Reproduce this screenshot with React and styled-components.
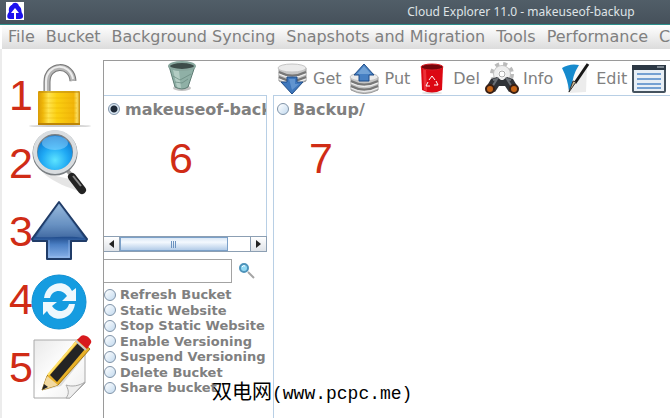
import React, { useState } from 'react'
import styled, { createGlobalStyle } from 'styled-components'

const GlobalStyle = createGlobalStyle`
  * { box-sizing: border-box; }
  body {
    margin: 0;
    overflow: hidden;
    background: #fff;
    font-family: "DejaVu Sans", sans-serif;
    color: #808080;
  }
  button {
    border: 0;
    padding: 0;
    background: none;
    font: inherit;
    color: inherit;
    cursor: pointer;
  }
  svg { display: block; overflow: visible; }
`

const menus = ['File', 'Bucket', 'Background Syncing', 'Snapshots and Migration', 'Tools', 'Performance', 'Configure']

const bucketActions = [
  'Refresh Bucket',
  'Static Website',
  'Stop Static Website',
  'Enable Versioning',
  'Suspend Versioning',
  'Delete Bucket',
  'Share bucket',
]

function LockIcon() {
  return (
    <svg width="62" height="68" viewBox="0 0 62 68">
      <defs>
        <linearGradient id="gold" x1="0" x2="1" y1="0" y2="0">
          <stop offset="0" stopColor="#d99a06" />
          <stop offset=".12" stopColor="#f0b90c" />
          <stop offset=".25" stopColor="#ffe34d" />
          <stop offset=".45" stopColor="#fbd010" />
          <stop offset=".85" stopColor="#f2b50a" />
          <stop offset=".93" stopColor="#fbdf60" />
          <stop offset="1" stopColor="#c98b08" />
        </linearGradient>
      </defs>
      <ellipse cx="29" cy="65" rx="31" ry="1" fill="#ccc" />
      <path d="M16 31V21C16 2 41 2 42 20" fill="none" stroke="#777" strokeWidth="7" />
      <path d="M16 31V21C16 2 41 2 42 20" fill="none" stroke="#b5b5b5" strokeWidth="5" />
      <path d="M15 31V20C16 2 39 1 42 18" fill="none" stroke="#ededed" strokeWidth="2" />
      <rect x="7" y="30" width="42" height="34" rx="1" fill="url(#gold)" />
      <path d="M8 31H48" stroke="#b98611" />
      <path d="M10 37H46M10 42H46M10 47H46M10 52H46M10 57H46" stroke="#e5a900" opacity=".35" />
      <path d="M7 63H49" stroke="#bd8506" strokeWidth="2" />
    </svg>
  )
}

function SearchIcon() {
  return (
    <svg width="62" height="68" viewBox="0 0 62 68">
      <defs>
        <radialGradient id="lens" cx=".5" cy=".68" r=".65">
          <stop offset="0" stopColor="#5de4ff" />
          <stop offset=".5" stopColor="#20a9f4" />
          <stop offset="1" stopColor="#0870ca" />
        </radialGradient>
      </defs>
      <path d="M12 44C24 54 36 58 50 63L43 51Z" fill="#ccc" opacity=".5" />
      <path d="M36 41L42 48" stroke="#999" strokeWidth="4" />
      <path d="M41 48L51 61" stroke="#222" strokeWidth="8" strokeLinecap="round" />
      <path d="M42 47L50 57" stroke="#8a8a8a" strokeWidth="2" />
      <circle cx="24" cy="24" r="20" fill="url(#lens)" stroke="#7a7f83" strokeWidth="5" />
      <circle cx="24" cy="23" r="20" fill="none" stroke="#d9dde0" strokeWidth="4" />
      <ellipse cx="24" cy="14" rx="13" ry="7" fill="#b3e0ff" opacity=".4" />
    </svg>
  )
}

function UpIcon() {
  return (
    <svg width="62" height="68" viewBox="0 0 62 68">
      <defs>
        <linearGradient id="steel" x1="0" x2="0" y1="0" y2="1">
          <stop offset="0" stopColor="#94b6da" />
          <stop offset=".4" stopColor="#527fb6" />
          <stop offset=".62" stopColor="#234f8f" />
          <stop offset=".75" stopColor="#4b7fc4" />
          <stop offset="1" stopColor="#8db6ec" />
        </linearGradient>
      </defs>
      <path d="M28 5L56 42L55 44H40V62H16V44H2L1 42Z" fill="url(#steel)" stroke="#203c68" strokeWidth="2" strokeLinejoin="round" />
      <path d="M28 8L53 41C38 38 25 41 5 40Z" fill="#b7d3eb" opacity=".22" />
      <path d="M18 43V60H38V43" fill="none" stroke="#9fc1ee" opacity=".7" />
    </svg>
  )
}

function SyncIcon() {
  return (
    <svg width="62" height="68" viewBox="0 0 62 68">
      <circle cx="28" cy="37" r="27" fill="#159ce0" stroke="#0f8fd2" />
      <path d="M13 33C15 17 35 13 41 26L45 23V36H31L36 31C31 23 21 25 19 33Z" fill="#eef8fd" />
      <path d="M44 39C42 55 22 59 16 46L12 50V37H26L21 41C26 49 36 47 38 39Z" fill="#eef8fd" />
    </svg>
  )
}

function NoteIcon() {
  return (
    <svg width="62" height="68" viewBox="0 0 62 68">
      <defs>
        <linearGradient id="paper" x1="0" x2="1" y1="0" y2="1">
          <stop offset="0" stopColor="#e9e9e9" />
          <stop offset=".5" stopColor="#fff" />
          <stop offset="1" stopColor="#ececec" />
        </linearGradient>
      </defs>
      <path d="M3 7H54V50L39 65H3Z" fill="url(#paper)" stroke="#aaa" />
      <path d="M35 65C39 60 37 56 35 52C41 54 48 53 54 49L39 65Z" fill="#eee" stroke="#aaa" />
      <path d="M14 57L30 53L56 20L54 15Z" fill="#999" opacity=".3" />
      <path d="M11 57L16 43L47 6L59 16L27 52Z" fill="#e8b128" stroke="#a57a16" />
      <path d="M11 57L16 43L27 52Z" fill="#f2d9a0" />
      <path d="M19 42L47 10L54 16L26 49Z" fill="#242424" />
      <path d="M17 42L47 7" stroke="#ffe16b" strokeWidth="2" />
      <path d="M46 7L50 3C53 0 62 6 60 10L56 16Z" fill="#d71a1e" />
      <path d="M45 8L55 17" stroke="#c9c9c9" strokeWidth="2" />
      <path d="M11 57L13 51L17 54Z" fill="#222" />
    </svg>
  )
}

function TrashIcon() {
  return (
    <svg width="28" height="30" viewBox="0 0 28 30">
      <ellipse cx="14" cy="27" rx="9" ry="3" fill="#999" opacity=".6" />
      <path d="M1 5L7 26Q14 30 20 26L27 5Z" fill="#8fb0a6" stroke="#5f7d75" />
      <path d="M5 9L9 26Q11 27 13 27L11 10Z" fill="#c2d8d0" opacity=".7" />
      <path d="M5 15L12 19L23 13M7 21L14 22L20 18" fill="none" stroke="#67877e" opacity=".7" />
      <ellipse cx="14" cy="5" rx="13" ry="4" fill="#3d4c49" stroke="#89a79e" strokeWidth="2" />
    </svg>
  )
}

function Disks({ y }) {
  return (
    <g transform={`translate(0 ${y})`}>
      <path d="M2 4V17Q15 24 29 17V4Z" fill="#c4c4c4" stroke="#999" />
      <path d="M2 8Q15 15 29 8M2 13Q15 20 29 13" fill="none" stroke="#777" strokeWidth="2" />
      <path d="M2 10Q15 17 29 10M2 15Q15 22 29 15" fill="none" stroke="#f4f4f4" />
      <ellipse cx="15" cy="4" rx="14" ry="4" fill="#ebebeb" stroke="#c4c4c4" />
    </g>
  )
}

function GetIcon() {
  return (
    <svg width="30" height="32" viewBox="0 0 30 32">
      <Disks y={2} />
      <path d="M10 15H20V20H26L15 32L4 20H10Z" fill="#3f78bd" stroke="#214d87" />
      <path d="M12 17H18V22H22L15 28Z" fill="#83b0e2" opacity=".5" />
    </svg>
  )
}

function PutIcon() {
  return (
    <svg width="30" height="32" viewBox="0 0 30 32">
      <Disks y={11} />
      <path d="M15 2L25 13H20V19H10V13H5Z" fill="#4680c3" stroke="#214d87" />
      <path d="M15 4L22 12H8Z" fill="#9cc4ea" opacity=".5" />
    </svg>
  )
}

function DelIcon() {
  return (
    <svg width="30" height="32" viewBox="0 0 30 32">
      <ellipse cx="15" cy="31" rx="10" ry="1" fill="#ddd" />
      <path d="M4 5L5 28Q15 33 25 28L26 5Z" fill="#dc0712" />
      <path d="M6 7L7 28L10 29L9 8Z" fill="#f54c52" opacity=".6" />
      <ellipse cx="15" cy="5" rx="11" ry="3" fill="#74060b" stroke="#d81b22" />
      <path d="M12 18L15 14L18 18M19 19L21 23H17M13 24H9L11 20" fill="none" stroke="#fff" strokeWidth="1" strokeLinejoin="round" />
    </svg>
  )
}

function InfoIcon() {
  return (
    <svg width="30" height="32" viewBox="0 0 30 32">
      <circle cx="15" cy="12" r="10" fill="none" stroke="#bbb" strokeWidth="4" strokeDasharray="4 4" />
      <circle cx="15" cy="12" r="6" fill="#fff" stroke="#c4c4c4" strokeWidth="6" />
      <circle cx="15" cy="12" r="6" fill="#fff" stroke="#eee" strokeWidth="4" />
      <circle cx="15" cy="12" r="3" fill="#fff" stroke="#aaa" />
      <path d="M4 17L10 15L14 18H16L20 15L26 17L32 27L22 30L18 24H12L8 30L-2 27Z" fill="#303338" />
      <path d="M6 18L10 17L5 25M24 18L20 17L25 25" fill="none" stroke="#6b7076" strokeWidth="2" />
      <circle cx="3" cy="27" r="4" fill="#c56315" stroke="#392015" strokeWidth="2" />
      <circle cx="27" cy="27" r="4" fill="#c56315" stroke="#392015" strokeWidth="2" />
    </svg>
  )
}

function EditIcon() {
  return (
    <svg width="30" height="32" viewBox="0 0 30 32">
      <path d="M7 6L27 3L26 30L8 31Z" fill="#ececec" />
      <path d="M2 6Q10 1 19 3L20 9L9 29Q8 18 2 6Z" fill="#168acd" />
      <path d="M19 3L25 3L12 25Q12 14 19 3Z" fill="#f9f9f9" />
      <path d="M28 2L15 21" stroke="#181818" strokeWidth="3" />
      <path d="M16 20L13 19L9 30Z" fill="#c9b48e" stroke="#333" />
    </svg>
  )
}

function ListIcon() {
  return (
    <svg width="30" height="32" viewBox="0 0 30 32">
      <rect x="-1" y="4" width="32" height="26" rx="1" fill="#e7eef5" stroke="#45535f" strokeWidth="2" />
      <path d="M-2 3H32V8H-2Z" fill="#2c3844" />
      <path d="M23 5H30" stroke="#ccd3da" />
      <path d="M3 12H27M3 17H27M3 22H27M3 26H27" stroke="#74a0d2" strokeWidth="2" />
    </svg>
  )
}

const tasks = [
  { label: 'Unlock', Icon: LockIcon },
  { label: 'Search', Icon: SearchIcon },
  { label: 'Upload', Icon: UpIcon },
  { label: 'Sync', Icon: SyncIcon },
  { label: 'Note', Icon: NoteIcon },
]

const tools = [
  { label: 'Get', Icon: GetIcon },
  { label: 'Put', Icon: PutIcon },
  { label: 'Del', Icon: DelIcon },
  { label: 'Info', Icon: InfoIcon },
  { label: 'Edit', Icon: EditIcon },
  { label: 'Sync', Icon: ListIcon },
]

function App() {
  const [action, setAction] = useState('')
  const [query, setQuery] = useState('')

  return (
    <Window>
      <GlobalStyle />
      <TitleBar>
        <AppLogo viewBox="0 0 18 18" aria-hidden="true">
          <rect width="18" height="18" fill="#fff" />
          <path d="M4 17C0 17 1 12 3 10C2 5 5 3 6 3C7 0 12 0 13 4C16 6 15 9 16 11C18 14 17 17 14 17Z" fill="#1c12ee" />
          <path d="M9 6L13 11H10V17H8V11H5Z" fill="#fff" />
        </AppLogo>
        <Title>Cloud Explorer 11.0 - makeuseof-backup</Title>
      </TitleBar>
      <MenuBar>
        {menus.map((menu) => <button key={menu}>{menu}</button>)}
      </MenuBar>
      <Body>
        <Sidebar>
          {tasks.map(({ label, Icon }, i) => (
            <Task key={label}>
              <Mark>{i + 1}</Mark>
              <button aria-label={label}><Icon /></button>
            </Task>
          ))}
        </Sidebar>
        <Panel>
          <BucketColumn>
            <BucketHeader>
              <button aria-label="Delete"><TrashIcon /></button>
            </BucketHeader>
            <BucketList>
              <Entry>
                <Radio name="bucket" defaultChecked />
                makeuseof-backup
              </Entry>
              <PaneMark $left="65px">6</PaneMark>
            </BucketList>
            <ScrollBar>
              <ScrollButton aria-label="Scroll left">
                <svg width="5" height="8"><path d="M5 0V8L0 4Z" fill="#222" /></svg>
              </ScrollButton>
              <Track><Thumb><i /><i /><i /></Thumb></Track>
              <ScrollButton aria-label="Scroll right">
                <svg width="5" height="8"><path d="M0 0V8L5 4Z" fill="#222" /></svg>
              </ScrollButton>
            </ScrollBar>
            <SearchRow>
              <SearchInput aria-label="Search" value={query} onChange={(e) => setQuery(e.target.value)} />
              <button aria-label="Find">
                <svg width="16" height="16" viewBox="0 0 16 16">
                  <path d="M9 9L15 15" stroke="#a5a5a5" strokeWidth="2" />
                  <circle cx="5" cy="5" r="4" fill="#93daf5" stroke="#4e93ba" strokeWidth="2" />
                  <path d="M3 4Q4 2 6 3" stroke="#fff" fill="none" />
                </svg>
              </button>
            </SearchRow>
            <Actions>
              {bucketActions.map((name) => (
                <Action key={name}>
                  <Radio name="action" checked={action === name} onChange={() => setAction(name)} />
                  {name}
                </Action>
              ))}
            </Actions>
          </BucketColumn>
          <FileColumn>
            <Toolbar>
              {tools.map(({ label, Icon }) => (
                <Tool key={label}><Icon />{label}</Tool>
              ))}
            </Toolbar>
            <FileList>
              <Entry>
                <Radio name="file" />
                Backup/
              </Entry>
              <PaneMark $left="35px">7</PaneMark>
            </FileList>
          </FileColumn>
        </Panel>
      </Body>
      <Watermark>双电网<span>(www.pcpc.me)</span></Watermark>
    </Window>
  )
}

export default App

const Window = styled.div`
  position: relative;
  display: flex;
  flex-direction: column;
  min-height: 100vh;
  overflow: hidden;
`

const TitleBar = styled.header`
  display: flex;
  align-items: center;
  height: 25px;
  padding: 0 0 2px 6px;
  background: linear-gradient(#515e68, #46515b);
  border-bottom: 1px solid #2c8f8c;
`

const AppLogo = styled.svg`
  width: 18px;
  height: 18px;
  flex: none;
`

const Title = styled.div`
  flex: 1;
  padding-left: 348px;
  text-align: center;
  white-space: nowrap;
  font: 12px "Noto Sans", sans-serif;
  color: #dfe3e6;
`

const MenuBar = styled.nav`
  display: flex;
  gap: 11px;
  height: 24px;
  padding: 0 0 2px 6px;
  margin-left: 2px;
  background: linear-gradient(#fff, #dcdcdc);
  font-size: 16px;
  white-space: nowrap;
  overflow: hidden;

  button {
    flex: none;
  }
`

const Body = styled.main`
  flex: 1;
  display: grid;
  grid-template-columns: 101px minmax(0, 1fr);
  border-left: 2px solid #ececec;
`

const Sidebar = styled.aside`
  display: flex;
  flex-direction: column;
  padding: 12px 0 0 7px;
`

const Task = styled.div`
  display: grid;
  grid-template-columns: 22px 62px;
  align-items: center;
  height: 68px;
`

const Mark = styled.span`
  font: 43px/48px "Liberation Sans", sans-serif;
  color: #d02c16;
`

const Panel = styled.section`
  display: flex;
  gap: 6px;
  margin-top: 11px;
  border-top: 1px solid #9a9a9a;
  border-left: 1px solid #9a9a9a;
`

const BucketColumn = styled.div`
  display: flex;
  flex-direction: column;
  width: 163px;
  flex: none;
`

const BucketHeader = styled.div`
  display: flex;
  justify-content: center;
  align-items: flex-start;
  height: 34px;
  padding-right: 8px;
`

const BucketList = styled.div`
  position: relative;
  height: 141px;
  overflow: hidden;
  border: 1px solid #b8cfe5;
  border-left: 0;
  border-bottom: 0;
`

const Entry = styled.label`
  display: flex;
  align-items: center;
  gap: 5px;
  height: 26px;
  padding-left: 4px;
  font-size: 16px;
  font-weight: bold;
  white-space: nowrap;
`

const Radio = styled.input.attrs({ type: 'radio' })`
  appearance: none;
  flex: none;
  width: 12px;
  height: 12px;
  margin: 0;
  border: 1px solid #7f93a8;
  border-radius: 50%;
  background: linear-gradient(135deg, #fff, #c3daef);

  &:checked {
    background: radial-gradient(circle, #1f2a38 0 3px, #dbe8f4 4px);
  }
`

const PaneMark = styled(Mark)`
  position: absolute;
  top: 38px;
  left: ${(p) => p.$left};
`

const ScrollBar = styled.div`
  display: flex;
  height: 16px;
  border: 1px solid #8c9fb3;
  border-left: 0;
`

const ScrollButton = styled.button`
  display: flex;
  align-items: center;
  justify-content: center;
  width: 15px;
  background: linear-gradient(#fff, #dfe3e8);
`

const Track = styled.div`
  flex: 1;
  background: #fff;
  border: solid #8c9fb3;
  border-width: 0 1px;
`

const Thumb = styled.div`
  display: flex;
  align-items: center;
  justify-content: center;
  gap: 1px;
  width: 83%;
  height: 100%;
  border: 1px solid #7ba0c8;
  background: linear-gradient(#dbe8f6, #f4f9fe 35%, #b3cce8);

  i {
    width: 1px;
    height: 7px;
    background: #6b93c0;
  }
`

const SearchRow = styled.div`
  display: flex;
  align-items: center;
  gap: 7px;
  margin-top: 7px;
`

const SearchInput = styled.input`
  width: 128px;
  height: 24px;
  border: 1px solid #a3a3a3;
  border-left: 0;
  outline: 0;
`

const Actions = styled.div`
  display: flex;
  flex-direction: column;
  justify-content: space-between;
  height: 108px;
  margin-top: 4px;
`

const Action = styled.label`
  display: flex;
  align-items: center;
  gap: 4px;
  height: 15px;
  font-size: 13px;
  font-weight: bold;
  white-space: nowrap;
`

const FileColumn = styled.div`
  flex: 1;
  min-width: 0;
  display: flex;
  flex-direction: column;
`

const Toolbar = styled.div`
  display: flex;
  gap: 7px;
  height: 34px;
  padding-left: 4px;
  overflow: hidden;
`

const Tool = styled.button`
  display: flex;
  align-items: center;
  gap: 6px;
  flex: none;
  font-size: 16px;
`

const FileList = styled.div`
  position: relative;
  flex: 1;
  border-top: 1px solid #b8cfe5;
  border-left: 1px solid #b8cfe5;

  label {
    padding-left: 3px;
    gap: 4px;
  }
`

const Watermark = styled.div`
  position: absolute;
  left: 212px;
  bottom: 10px;
  font: 20px/28px "Noto Sans CJK SC", sans-serif;
  color: #000;

  span {
    font-family: "Liberation Mono", monospace;
    font-size: 18px;
  }
`
